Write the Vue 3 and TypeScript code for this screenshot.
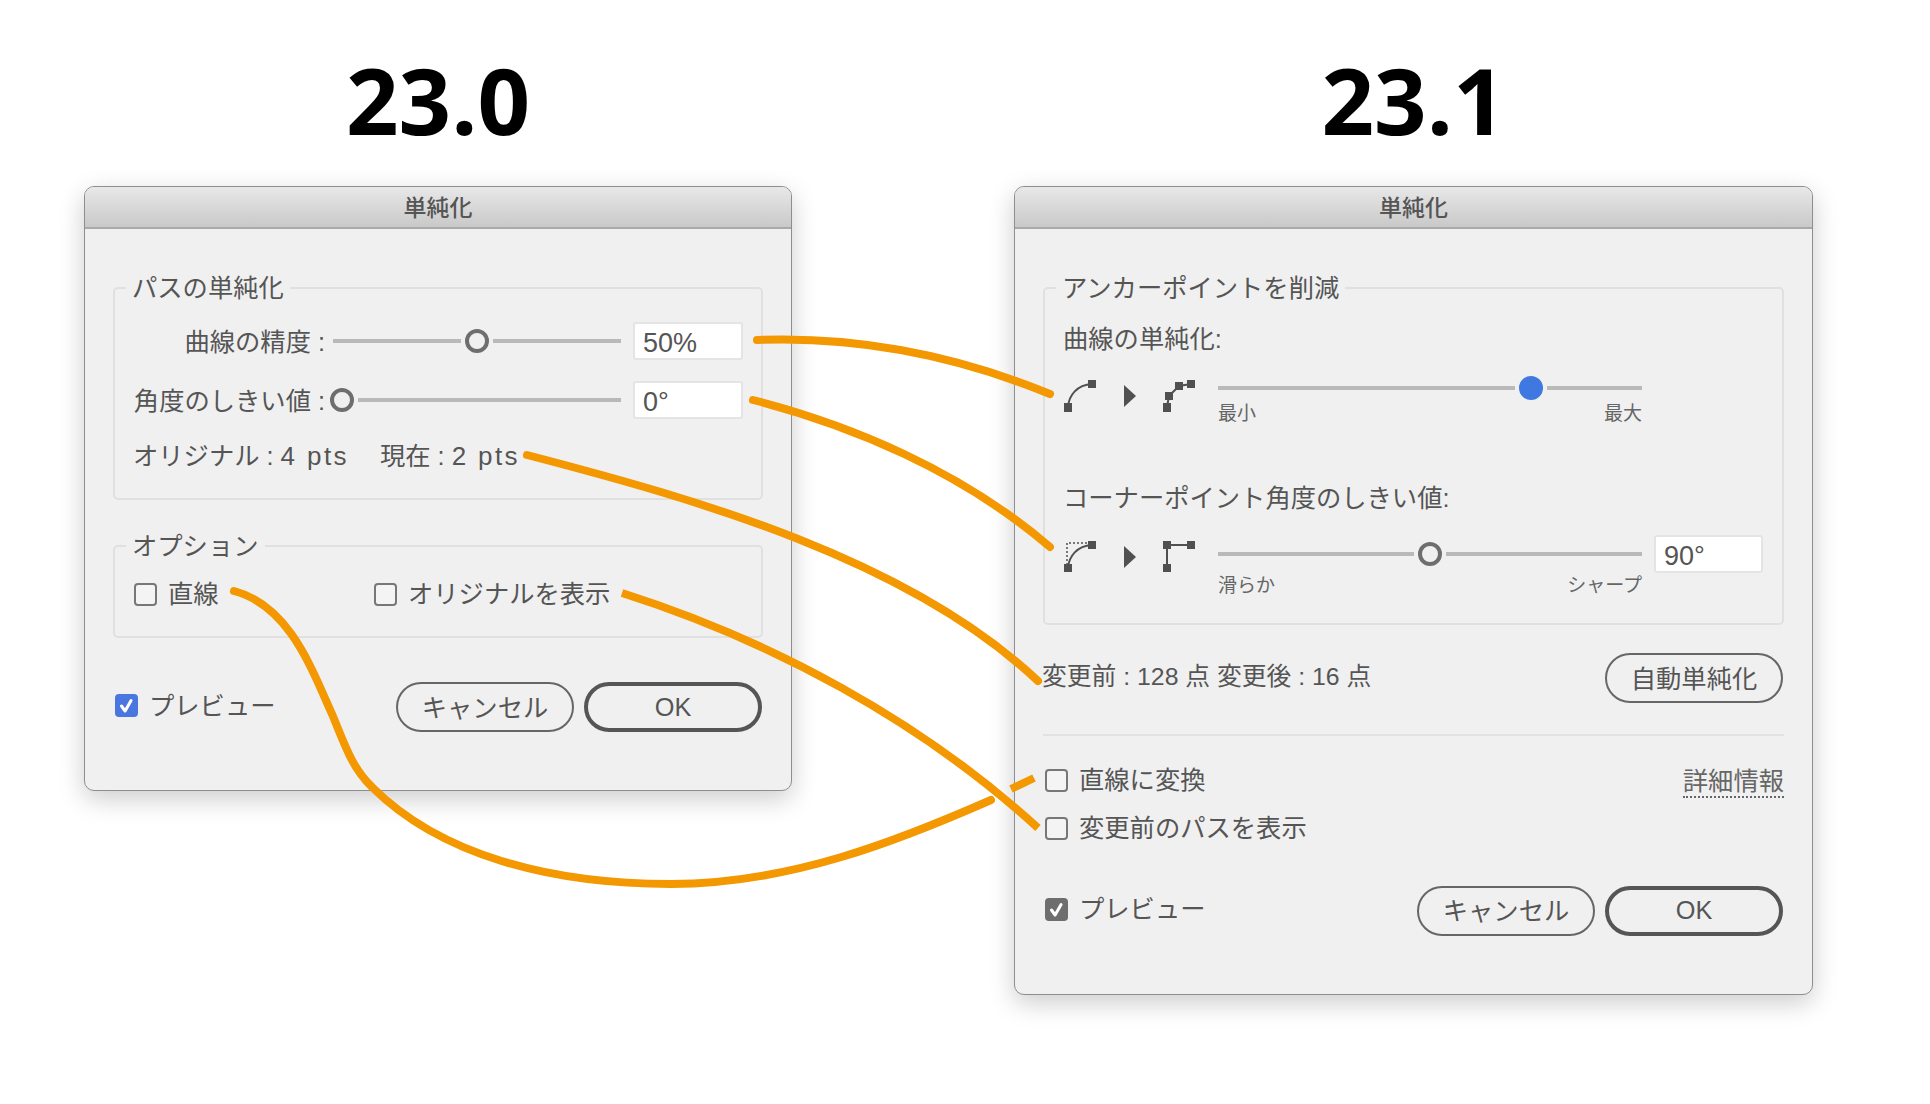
<template>
  <div class="page">
    <!-- 23.0 -->
    <section class="col col-old">
      <h1 class="ver">23.0</h1>
      <div class="dlg dlg-old">
        <div class="dlg-title">単純化</div>
        <div class="dlg-body">
          <fieldset class="group">
            <legend>パスの単純化</legend>
            <div class="old-row first">
              <span class="old-label">曲線の精度 :</span>
              <div class="slider s-precision">
                <span class="track t-precision"></span>
                <span class="thumb"></span>
                <span class="track grow"></span>
              </div>
              <div class="field">50%</div>
            </div>
            <div class="old-row">
              <span class="old-label">角度のしきい値 :</span>
              <div class="slider s-angle">
                <span class="thumb"></span>
                <span class="track grow"></span>
              </div>
              <div class="field">0°</div>
            </div>
            <div class="old-stats">
              <span>オリジナル : <span class="lat">4 pts</span></span>
              <span>現在 : <span class="lat">2 pts</span></span>
            </div>
          </fieldset>

          <fieldset class="group group-opt">
            <legend>オプション</legend>
            <div class="old-opts">
              <label class="check c-line"><span class="box"></span>直線</label>
              <label class="check"><span class="box"></span>オリジナルを表示</label>
            </div>
          </fieldset>

          <div class="foot foot-old">
            <label class="check">
              <span class="box on">
                <svg viewBox="0 0 23 23"><path d="M6.500 12l3.600 5 6-10.500" fill="none" stroke="#fff" stroke-width="3" stroke-linecap="round" stroke-linejoin="round" /></svg>
              </span>プレビュー
            </label>
            <div class="btns">
              <button class="btn">キャンセル</button>
              <button class="btn primary">OK</button>
            </div>
          </div>
        </div>
      </div>
    </section>

    <!-- 23.1 -->
    <section class="col col-new">
      <h1 class="ver">23.1</h1>
      <div class="dlg dlg-new">
        <div class="dlg-title">単純化</div>
        <div class="dlg-body">
          <fieldset class="group">
            <legend>アンカーポイントを削減</legend>
            <div class="new-label first">曲線の単純化:</div>
            <div class="new-row r-curve">
              <div class="icons">
                <svg class="ic" viewBox="0 0 32 32">
                  <path d="M4 27C5 15 13 5 28 4" class="ln" />
                  <rect x="0" y="23" width="8" height="9" /><rect x="24" y="0" width="8" height="8" />
                </svg>
                <svg class="arrow" viewBox="0 0 12 22"><polygon points="0,0 12,11 0,22" /></svg>
                <svg class="ic" viewBox="0 0 32 32">
                  <path d="M4 27L6 16L16 6L28 4" class="ln" />
                  <rect x="0" y="23" width="8" height="9" /><rect x="2" y="12" width="8" height="8" />
                  <rect x="12" y="2" width="8" height="8" /><rect x="24" y="0" width="8" height="8" />
                </svg>
              </div>
              <div class="scale">
                <div class="slider">
                  <span class="track t-curve"></span>
                  <span class="thumb blue"></span>
                  <span class="track grow"></span>
                </div>
                <div class="ends"><span>最小</span><span>最大</span></div>
              </div>
            </div>

            <div class="new-label second">コーナーポイント角度のしきい値:</div>
            <div class="new-row r-corner">
              <div class="icons">
                <svg class="ic" viewBox="0 0 32 32">
                  <path d="M3 24V2H24" class="dots" />
                  <path d="M4 27C5 15 13 5 28 4" class="ln" />
                  <rect x="0" y="23" width="8" height="8" /><rect x="24" y="0" width="8" height="8" />
                </svg>
                <svg class="arrow" viewBox="0 0 12 22"><polygon points="0,0 12,11 0,22" /></svg>
                <svg class="ic" viewBox="0 0 32 32">
                  <path d="M4 27V4H28" class="ln" />
                  <rect x="0" y="23" width="8" height="8" /><rect x="0" y="0" width="8" height="8" />
                  <rect x="24" y="0" width="8" height="8" />
                </svg>
              </div>
              <div class="scale">
                <div class="slider">
                  <span class="track t-corner"></span>
                  <span class="thumb"></span>
                  <span class="track grow"></span>
                </div>
                <div class="ends"><span>滑らか</span><span>シャープ</span></div>
              </div>
              <div class="field f-corner">90°</div>
            </div>
          </fieldset>

          <div class="info">
            <span class="info-text">変更前 : 128 点 変更後 : 16 点</span>
            <button class="btn auto">自動単純化</button>
          </div>

          <div class="divider"></div>

          <div class="new-opts">
            <div class="opt-line">
              <label class="check"><span class="box"></span>直線に変換</label>
              <a class="more">詳細情報</a>
            </div>
            <label class="check second-opt"><span class="box"></span>変更前のパスを表示</label>
          </div>

          <div class="foot foot-new">
            <label class="check">
              <span class="box on gray">
                <svg viewBox="0 0 23 23"><path d="M6.500 12l3.600 5 6-10.500" fill="none" stroke="#fff" stroke-width="3" stroke-linecap="round" stroke-linejoin="round" /></svg>
              </span>プレビュー
            </label>
            <div class="btns">
              <button class="btn">キャンセル</button>
              <button class="btn primary">OK</button>
            </div>
          </div>
        </div>
      </div>
    </section>

    <!-- 対応線 -->
    <svg class="links" viewBox="0 0 1930 1104">
      <path v-for="(d, i) in LINKS" :key="i" :d="d" class="link" />
      <path d="M622 593C770 640 920 720 1038 828" class="link butt" />
      <path d="M1011 789L1034 778" class="link butt" />
    </svg>
  </div>
</template>

<script setup lang="ts">
const LINKS: string[] = [
  'M757 340C860 336 960 357 1050 394',
  'M753 400C850 425 960 470 1050 547',
  'M527 455C700 500 910 560 1038 681',
  'M234 591C290 606 312 670 332 714C345 745 352 768 372 787C440 855 550 884 671 884C790 884 900 840 991 800',
];
</script>

<style>
html, body { margin: 0; background: #fff; }
</style>

<style scoped>
.page {
  position: relative;
  width: 1930px;
  height: 1104px;
  overflow: hidden;
  display: flex;
  align-items: flex-start;
  gap: 222px;
  padding-left: 84px;
  box-sizing: border-box;
  background: #fff;
  color: #555;
  font-family: "Liberation Sans", "Noto Sans CJK JP", sans-serif;
  font-size: 25.300px;
}
.col { flex-shrink: 0; }
.col-old { width: 708px; }
.col-new { width: 799px; }
.ver {
  margin: 0;
  height: 186px;
  line-height: 200px;
  text-align: center;
  font-family: "Open Sans", sans-serif;
  font-weight: 700;
  font-size: 92px;
  color: #000;
}

.dlg {
  box-sizing: border-box;
  background: #f0f0f0;
  border: 1px solid #8e8e8e;
  border-radius: 10px;
  box-shadow: 0 8px 26px rgba(0, 0, 0, 0.2);
  overflow: hidden;
}
.dlg-old { height: 605px; }
.dlg-new { height: 809px; }
.dlg-title {
  box-sizing: border-box;
  height: 42px;
  line-height: 42px;
  text-align: center;
  font-size: 23px;
  font-weight: 500;
  background: linear-gradient(#e8e8e8, #c9c9c9);
  border-bottom: 2px solid #a9a9a9;
}
.dlg-body { padding: 0 28px; }

.group {
  margin: 42px 0 0;
  padding: 17px 18px 25px 18px;
  min-width: 0;
  border: 2px solid #e0e0e0;
  border-radius: 5px;
}
.group legend {
  margin-left: -7px;
  padding: 0 6px;
  line-height: 34px;
}
.group-opt { margin-top: 29px; padding-top: 14px; }

/* sliders */
.slider { display: flex; align-items: center; gap: 4px; height: 24px; }
.track { height: 4px; background: #b9b9b9; }
.track.grow { flex: 1; }
.thumb {
  box-sizing: border-box;
  flex-shrink: 0;
  width: 24px;
  height: 24px;
  border: 4px solid #6e6e6e;
  border-radius: 50%;
  background: #f0f0f0;
}
.thumb.blue { background: #3e78e0; border-color: #3e78e0; }
.t-precision { width: 128px; }
.t-curve { width: 297px; }
.t-corner { width: 196px; }

.field {
  box-sizing: border-box;
  width: 110px;
  height: 38px;
  padding-left: 8px;
  line-height: 38px;
  font-size: 27px;
  background: #fff;
  border: 2px solid #e4e4e4;
  border-radius: 3px;
}

/* 23.0 */
.old-row { display: flex; align-items: center; height: 38px; margin-top: 21px; }
.old-row.first { margin-top: 0; }
.old-label { width: 192px; margin-top: -3px; text-align: right; white-space: nowrap; flex-shrink: 0; }
.old-row .slider { flex: 1; margin-right: 12px; }
.s-precision { margin-left: 8px; }
.s-angle { margin-left: 5px; }
.old-stats { display: flex; gap: 31px; line-height: 34px; margin-top: 20px; white-space: nowrap; }
.lat { font-size: 26px; letter-spacing: 2.400px; }
.old-opts { display: flex; margin-left: 1px; line-height: 34px; }
.c-line { width: 240px; }

.check { display: inline-flex; align-items: center; gap: 11px; line-height: 34px; white-space: nowrap; }
.box {
  box-sizing: border-box;
  flex-shrink: 0;
  width: 23px;
  height: 23px;
  border: 2px solid #777;
  border-radius: 4px;
  background: #f4f4f4;
}
.box.on { border: none; background: #4a76e0; }
.box.on.gray { background: #6e6e6e; }
.box svg { display: block; width: 23px; height: 23px; }

.foot { display: flex; align-items: center; justify-content: space-between; padding: 0 1px 0 2px; }
.foot .check { margin-top: -3px; }
.foot-old { margin-top: 44px; }
.foot-new { margin-top: 40px; }
.btns { display: flex; gap: 10px; }
.btn {
  box-sizing: border-box;
  width: 178px;
  height: 50px;
  padding: 0 0 3px;
  font: inherit;
  color: #555;
  background: transparent;
  border: 2px solid #666;
  border-radius: 25px;
}
.btn.primary { border: 4px solid #555; padding-bottom: 0; }

/* 23.1 */
.new-label { line-height: 34px; white-space: nowrap; }
.new-label.second { margin-top: 54px; }
.new-row { display: flex; align-items: flex-start; }
.r-curve { margin-top: 20px; width: 578px; }
.r-corner { margin: 27px 0 -1px; }
.icons { display: flex; align-items: center; width: 154px; margin-left: 1px; flex-shrink: 0; }
.r-curve .icons { margin-top: 4px; }
.r-corner .icons { margin-top: -1px; }
.ic { width: 32px; height: 32px; fill: #505050; flex-shrink: 0; }
.ic .ln { fill: none; stroke: #505050; stroke-width: 2; }
.ic .dots { fill: none; stroke: #505050; stroke-width: 1.500; stroke-dasharray: 2 2; }
.arrow { width: 12px; height: 22px; margin: 0 27px 0 28px; fill: #505050; flex-shrink: 0; }
.scale { width: 424px; flex-shrink: 0; }
.ends {
  display: flex;
  justify-content: space-between;
  margin-top: 1px;
  font-size: 19px;
  line-height: 26px;
  color: #666;
}
.r-corner .ends { margin-top: 7px; }
.f-corner { width: 109px; margin: -7px 0 0 12px; line-height: 39px; }

.info { display: flex; align-items: center; justify-content: space-between; margin-top: 28px; padding-right: 1px; }
.info-text { margin: -3px 0 0 -1px; font-size: 24.800px; line-height: 34px; white-space: nowrap; }
.divider { height: 2px; margin-top: 31px; background: #e2e2e2; }
.new-opts { margin-top: 27px; padding-left: 2px; }
.opt-line { display: flex; justify-content: space-between; align-items: flex-start; }
.second-opt { margin-top: 13px; }
.more {
  margin-top: 3px;
  line-height: 30px;
  border-bottom: 2px dotted #666;
  color: #666;
}

/* connector overlay */
.links { position: absolute; top: 0; left: 0; width: 1930px; height: 1104px; pointer-events: none; }
.link { fill: none; stroke: #f39800; stroke-width: 8; stroke-linecap: round; }
.link.butt { stroke-linecap: butt; }
</style>
